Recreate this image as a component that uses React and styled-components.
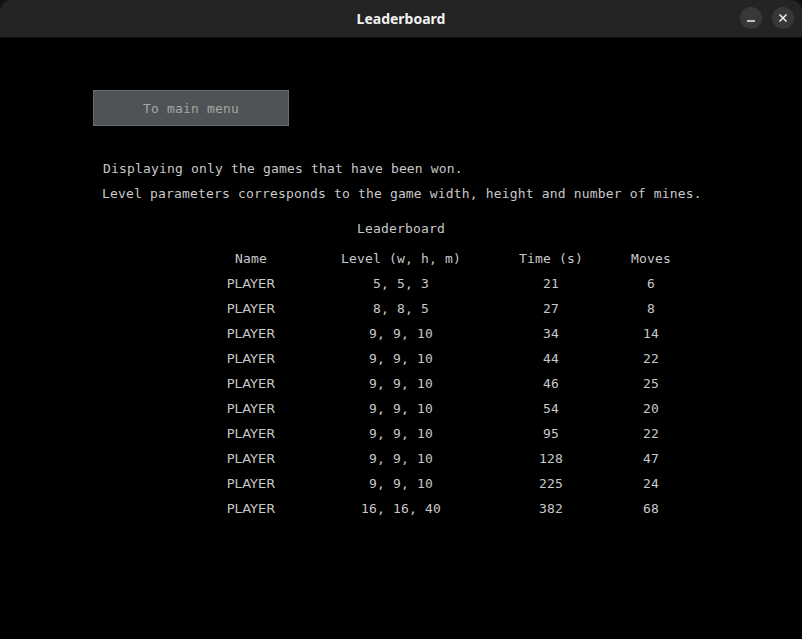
import React from 'react';
import styled, { createGlobalStyle } from 'styled-components';

const GlobalStyle = createGlobalStyle`
    html, body {
        margin: 0;
        padding: 0;
        background: #111;
    }
`;

const rows = [
    ['PLAYER', '5, 5, 3', 21, 6],
    ['PLAYER', '8, 8, 5', 27, 8],
    ['PLAYER', '9, 9, 10', 34, 14],
    ['PLAYER', '9, 9, 10', 44, 22],
    ['PLAYER', '9, 9, 10', 46, 25],
    ['PLAYER', '9, 9, 10', 54, 20],
    ['PLAYER', '9, 9, 10', 95, 22],
    ['PLAYER', '9, 9, 10', 128, 47],
    ['PLAYER', '9, 9, 10', 225, 24],
    ['PLAYER', '16, 16, 40', 382, 68],
];

const StyledWindow = styled.div`
    display: flex;
    flex-direction: column;
    width: 802px;
    height: 639px;
    background: #000;
    border-radius: 11px 11px 0 0;
    overflow: hidden;
`;

const StyledTitleBar = styled.div`
    position: relative;
    display: flex;
    align-items: center;
    justify-content: center;
    height: 37px;
    flex-shrink: 0;
    background: #242424;
    border-bottom: 1px solid #111;
    color: #f2f2f2;
    font-family: 'Noto Sans', 'DejaVu Sans', sans-serif;
    font-weight: 700;
    font-size: 14px;
`;

const StyledControls = styled.div`
    position: absolute;
    right: 8px;
    top: 7px;
    display: flex;
    gap: 10px;
`;

const StyledCircle = styled.div`
    display: flex;
    align-items: center;
    justify-content: center;
    width: 22px;
    height: 22px;
    border-radius: 50%;
    background: #383838;
`;

const StyledContent = styled.div`
    display: flex;
    flex-direction: column;
    padding: 52px 0 0 0;
    font-family: 'DejaVu Sans Mono', 'Liberation Mono', monospace;
    font-size: 13px;
    letter-spacing: 0.17px;
    color: #c8c8c8;
`;

const StyledButton = styled.div`
    display: flex;
    align-items: center;
    justify-content: center;
    margin-left: 93px;
    width: 194px;
    height: 34px;
    background: #4f5355;
    border: 1px solid #6b6e70;
    color: #a6a6a6;
    font-size: 13px;
`;

const StyledNote = styled.p`
    margin: 0;
    height: 25px;
    line-height: 25px;
    padding-left: ${props => props.indent}px;
`;

const StyledNotes = styled.div`
    display: flex;
    flex-direction: column;
    margin-top: 30px;
`;

const StyledCaption = styled.div`
    text-align: center;
    height: 25px;
    line-height: 25px;
    margin-top: 10px;
    margin-bottom: 5px;
`;

const StyledTable = styled.div`
    display: grid;
    grid-template-columns: 100px 200px 100px 100px;
    grid-auto-rows: 25px;
    margin-left: 201px;
`;

const StyledCell = styled.div`
    display: flex;
    align-items: center;
    justify-content: center;
    font-family: ${props => props.sans ? "'DejaVu Sans', 'Noto Sans', sans-serif" : "'DejaVu Sans Mono', monospace"};
    letter-spacing: ${props => props.sans ? '0' : '0.17px'};
`;

export default function App() {
    return (
        <>
            <GlobalStyle />
            <StyledWindow>
                <StyledTitleBar>
                    Leaderboard
                    <StyledControls>
                        <StyledCircle>
                            <svg width="10" height="10" viewBox="0 0 10 10">
                                <line x1="1" y1="8" x2="9" y2="8" stroke="#f0f0f0" strokeWidth="1.5" />
                            </svg>
                        </StyledCircle>
                        <StyledCircle>
                            <svg width="10" height="10" viewBox="0 0 10 10">
                                <path d="M1.5 1.5 L8.5 8.5 M8.5 1.5 L1.5 8.5" stroke="#f0f0f0" strokeWidth="1.5" />
                            </svg>
                        </StyledCircle>
                    </StyledControls>
                </StyledTitleBar>
                <StyledContent>
                    <StyledButton>To main menu</StyledButton>
                    <StyledNotes>
                        <StyledNote indent={103}>Displaying only the games that have been won.</StyledNote>
                        <StyledNote indent={102}>Level parameters corresponds to the game width, height and number of mines.</StyledNote>
                    </StyledNotes>
                    <StyledCaption>Leaderboard</StyledCaption>
                    <StyledTable>
                        <StyledCell>Name</StyledCell>
                        <StyledCell>Level (w, h, m)</StyledCell>
                        <StyledCell>Time (s)</StyledCell>
                        <StyledCell>Moves</StyledCell>
                        {rows.map((row, i) => row.map((value, j) => (
                            <StyledCell key={`${i}-${j}`} sans={j === 0}>{value}</StyledCell>
                        )))}
                    </StyledTable>
                </StyledContent>
            </StyledWindow>
        </>
    );
}
